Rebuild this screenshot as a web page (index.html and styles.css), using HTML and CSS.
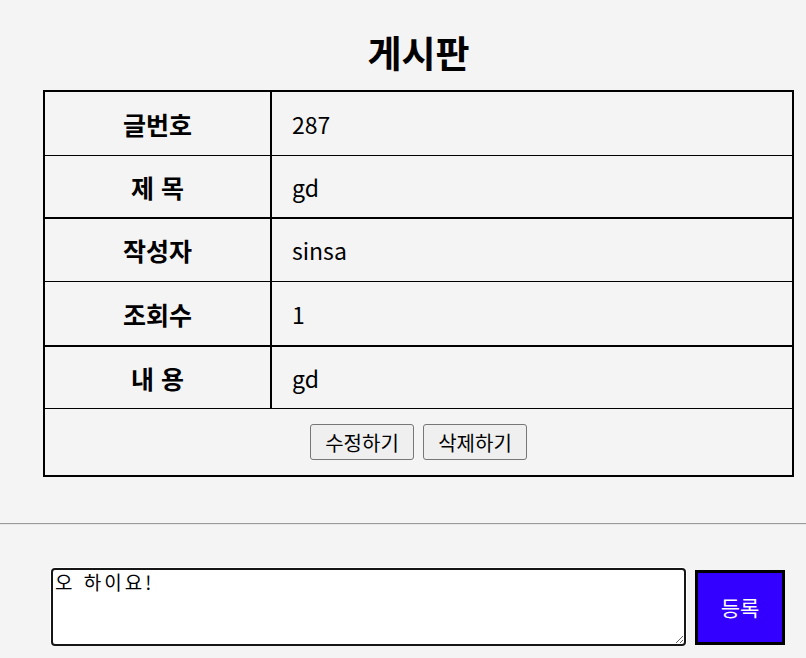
FILE: index.html
```html
<!DOCTYPE html>
<html lang="ko">
<head>
<meta charset="utf-8">
<title>게시판</title>
<link rel="stylesheet" href="styles.css">
</head>
<body>
<div class="board">
  <h1 class="board-title">게시판</h1>
  <div class="board-table">
    <div class="cell label row-1">글번호</div>
    <div class="cell value row-1">287</div>
    <div class="cell label row-2">제 목</div>
    <div class="cell value row-2">gd</div>
    <div class="cell label row-3">작성자</div>
    <div class="cell value row-3">sinsa</div>
    <div class="cell label row-4">조회수</div>
    <div class="cell value row-4">1</div>
    <div class="cell label row-5">내 용</div>
    <div class="cell value row-5">gd</div>
    <div class="cell actions">
      <button class="btn" type="button">수정하기</button>
      <button class="btn" type="button">삭제하기</button>
    </div>
  </div>
</div>
<hr class="divider">
<form class="comment-form">
  <textarea class="comment-input">오 하이요!</textarea>
  <button class="comment-submit" type="button">등록</button>
</form>
</body>
</html>
```
FILE: styles.css
```css
html, body {
  margin: 0;
  padding: 0;
  background: #f4f4f4;
  font-family: "Noto Sans CJK KR", "Noto Sans", sans-serif;
  color: #000;
}

.board {
  width: 751px;
  margin-left: 43px;
}

.board-title {
  margin: 28px 0 14px;
  font-size: 37px;
  line-height: 48px;
  font-weight: 700;
  text-align: center;
}

.board-table {
  display: grid;
  grid-template-columns: 227px 1fr;
  border: 2px solid #000;
}

.cell {
  box-sizing: border-box;
  display: flex;
  align-items: center;
  font-size: 23px;
}

.label {
  justify-content: center;
  font-size: 25px;
  font-weight: 700;
  border-right: 2px solid #000;
}

.value {
  padding-left: 20px;
}

.row-1 { height: 64px; border-bottom: 1px solid #000; }
.row-2 { height: 63px; border-bottom: 2px solid #000; }
.row-3 { height: 63px; border-bottom: 1px solid #000; }
.row-4 { height: 65px; border-bottom: 2px solid #000; }
.row-5 { height: 62px; border-bottom: 1px solid #000; }

.actions {
  grid-column: 1 / 3;
  height: 66px;
  justify-content: center;
  gap: 9px;
}

.btn {
  box-sizing: border-box;
  width: 104px;
  height: 36px;
  padding: 0;
  font-family: inherit;
  font-size: 20px;
  color: #000;
  background: #efefef;
  border: 1px solid #767676;
  border-radius: 3px;
}

.divider {
  margin: 46px 0 0;
  border: 0;
  border-top: 1px solid #9a9a9a;
  border-bottom: 1px solid #e8e8e8;
  height: 0;
}

.comment-form {
  display: flex;
  align-items: center;
  gap: 9px;
  margin: 43px 0 0 51px;
}

.comment-input {
  box-sizing: border-box;
  width: 635px;
  height: 78px;
  padding: 1px 2px;
  font-family: "Noto Sans CJK KR", sans-serif;
  font-size: 19px;
  letter-spacing: 3px;
  line-height: 22px;
  background: #fff;
  border: 2px solid #161616;
  border-radius: 4px;
  box-shadow: 0 0 0 1px #fff;
  resize: vertical;
  outline: none;
}

.comment-submit {
  box-sizing: border-box;
  width: 90px;
  height: 75px;
  font-family: inherit;
  font-size: 21px;
  color: #fff;
  background: #3300ff;
  border: 3px solid #000;
  border-radius: 0;
}
```
